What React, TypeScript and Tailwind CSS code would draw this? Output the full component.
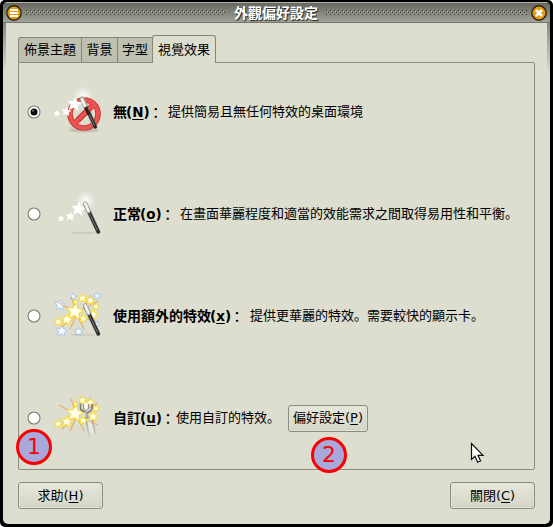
import React from "react";

const STAR = "M0-5 1.5-1.8 5-1.5 2.4.8 3.2 4.3 0 2.4-3.2 4.3-2.4.8-5-1.5-1.5-1.8Z";

type StarProps = { x: number; y: number; s: number; kind: "white" | "gold" | "blue"; r?: number };

function Star({ x, y, s, kind, r = 8 }: StarProps) {
  const stroke = kind === "gold" ? "#f8dc2c" : kind === "blue" ? "#b0cbea" : "#ebebe4";
  const fill = kind === "gold" ? "#fffef0" : kind === "blue" ? "#f6faff" : "#ffffff";
  return (
    <g transform={`translate(${x} ${y}) rotate(${r}) scale(${s})`}>
      <path d={STAR} fill={fill} stroke={stroke} strokeWidth={kind === "white" ? 0.6 : 2.6 / s} strokeLinejoin="round" />
      <path d={STAR} fill={fill} stroke={fill} strokeWidth={kind === "white" ? 0 : 0.5 / s} />
    </g>
  );
}

function Wand() {
  return (
    <g>
      <ellipse cx="30" cy="44" rx="13" ry="1.3" fill="#8d8d80" opacity=".18" />
      <path d="M32.300 15 45.300 42.800" stroke="#777872" strokeWidth="4.200" strokeLinecap="round" />
      <path d="M32.300 15 45.300 42.800" stroke="#222422" strokeWidth="3" strokeLinecap="round" />
      <path d="M36 23.500 44.500 41.500" stroke="#7d807a" strokeWidth="1" />
      <path d="M32.300 14.500 35.500 22" stroke="#a5a59e" strokeWidth="4.200" strokeLinecap="round" />
      <path d="M32.300 14.500 35.500 22" stroke="#f5f5f2" strokeWidth="2.600" strokeLinecap="round" />
    </g>
  );
}

function Glow() {
  return (
    <>
      <defs>
        <radialGradient id="glow">
          <stop offset="0" stopColor="#fff" stopOpacity=".95" />
          <stop offset="1" stopColor="#fff" stopOpacity="0" />
        </radialGradient>
      </defs>
      <circle cx="33" cy="12" r="10" fill="url(#glow)" />
    </>
  );
}

function WhiteStars() {
  return (
    <>
      <Star x={8} y={29.5} s={0.65} kind="white" />
      <Star x={17.3} y={27.5} s={0.88} kind="white" />
      <Star x={25.5} y={20} s={1.4} kind="white" />
    </>
  );
}

function GoldStars() {
  return (
    <>
      <path d="M22 21 6 12M23 19 18 6M21 24 9 36M23 25 17 38M27 20 45 10M30 18 38 4M28 25 45 32M25 26 31 38" stroke="#ef9a45" strokeWidth="1.200" opacity=".7" />
      <Star x={5.2} y={30.8} s={0.58} kind="gold" />
      <Star x={14} y={28.5} s={0.85} kind="gold" />
      <Star x={22} y={20.5} s={1.4} kind="gold" />
      <Star x={29.5} y={7.2} s={0.6} kind="gold" />
      <Star x={37.3} y={9.5} s={0.6} kind="gold" />
      <Star x={43} y={15.500} s={0.42} kind="gold" />
      <Star x={22.7} y={11} s={0.25} kind="gold" />
      <Star x={40.2} y={23.500} s={0.75} kind="gold" />
      <Star x={30.2} y={27.500} s={0.6} kind="gold" />
    </>
  );
}

function NoneIcon() {
  return (
    <svg width="52" height="50" viewBox="0 0 52 50">
      <g transform="translate(-3 -3)"><Glow /></g>
      <ellipse cx="31" cy="43.500" rx="15" ry="2" fill="#88887c" opacity=".3" />
      <g fill="none">
        <circle cx="31" cy="27" r="14" stroke="#cc3030" strokeWidth="5.600" />
        <path d="M21.500 36.500 40.500 17.500" stroke="#cc3030" strokeWidth="5.600" />
        <circle cx="31" cy="27" r="14" stroke="#ec5353" strokeWidth="3.800" />
        <path d="M20.500 37.500 41.500 16.500" stroke="#ec5353" strokeWidth="3.800" />
      </g>
      <g transform="translate(-3 -3)"><Wand /></g>
      <path d="M25 33 37 21" stroke="#cc3030" strokeWidth="5.600" />
      <path d="M22 36 40 18" stroke="#ec5353" strokeWidth="3.800" />
      <path d="M29 12.500 32.500 20" stroke="#a5a59e" strokeWidth="4.200" strokeLinecap="round" />
      <path d="M29 12.500 32.500 20" stroke="#f5f5f2" strokeWidth="2.600" strokeLinecap="round" />
      <path d="M32.500 20 36 27.500" stroke="#222422" strokeWidth="3.200" />
      <g transform="translate(-4 -3)"><WhiteStars /></g>
    </svg>
  );
}

function NormalIcon() {
  return (
    <svg width="52" height="50" viewBox="0 0 52 50">
      <Glow />
      <WhiteStars />
      <Wand />
    </svg>
  );
}

function ExtraIcon() {
  return (
    <svg width="52" height="50" viewBox="0 0 52 50">
      <Star x={7} y={14} s={0.85} kind="blue" />
      <Star x={20} y={5.4} s={0.42} kind="blue" />
      <Star x={44.2} y={5} s={0.5} kind="blue" />
      <Star x={8.7} y={40} s={0.85} kind="blue" />
      <Star x={25.7} y={40.7} s={0.6} kind="blue" />
      <Star x={43.3} y={32.5} s={0.55} kind="blue" />
      <GoldStars />
      <Wand />
    </svg>
  );
}

function CustomIcon() {
  return (
    <svg width="52" height="50" viewBox="0 0 52 50">
      <defs>
        <linearGradient id="leg" x1="0" y1="24" x2="0" y2="47" gradientUnits="userSpaceOnUse">
          <stop offset="0" stopColor="#96978e" />
          <stop offset="1" stopColor="#b0b1a5" stopOpacity=".25" />
        </linearGradient>
      </defs>
      <path d="M32.500 24 36.800 46M38.500 24 42.500 41" stroke="url(#leg)" strokeWidth="1.400" />
      <path d="M35.500 24 38.500 40" stroke="#edeee8" strokeWidth="3.500" opacity=".75" />
      <GoldStars />
      <path d="M27.500 10.500v4.500q0 3 5 4M39 11q1 6-3 8l-3 1" fill="none" stroke="#7c7e77" strokeWidth="1.700" />
      <path d="M33 10v7" stroke="#f8f8f4" strokeWidth="3.500" />
      <path d="M30.500 11v5q2.500 3 5 0v-5" fill="none" stroke="#94968e" strokeWidth="1" />
      <path d="M33.500 20 35 26" stroke="#a9aaa2" strokeWidth="2.500" />
    </svg>
  );
}

function Radio({ on }: { on?: boolean }) {
  return (
    <svg className="h-[14px] w-[14px] shrink-0" viewBox="0 0 14 14">
      <circle cx="7" cy="7" r="6" fill="#fff" stroke="#7b7c73" strokeWidth="1.100" />
      {on && <circle cx="7" cy="7" r="3.500" fill="#0b0b0b" />}
      {on && <circle cx="6" cy="5.800" r="1" fill="#77776f" />}
    </svg>
  );
}

type RowProps = {
  icon: React.ReactNode;
  name: string;
  k: string;
  labelClass: string;
  text: string;
  on?: boolean;
  children?: React.ReactNode;
};

function Row({ icon, name, k, labelClass, text, on, children }: RowProps) {
  return (
    <div className="flex h-[50px] items-center whitespace-nowrap pl-[8px]">
      <Radio on={on} />
      <div className="ml-[12px] w-[52px] shrink-0">{icon}</div>
      <div className={`ml-[8px] flex shrink-0 text-[14px] font-bold leading-[18px] ${labelClass}`}>
        <span>{name}</span>
        <span className="-ml-px text-[13.5px]">(<u className="underline-offset-2">{k}</u>)</span>
        <span className="-ml-px pt-px font-medium">：</span>
      </div>
      <div className="shrink-0 text-[13px] leading-[18px]">{text}</div>
      {children}
    </div>
  );
}

const BUTTON =
  "flex h-[27px] items-center justify-center rounded-[3px] border border-[#8b8c80] bg-linear-to-b from-[#e6e7dc] to-[#d5d6c6] text-[13px] shadow-[inset_0_0_0_1px_#e4e5d9,inset_-1px_-1px_2px_#c4c5b5]";

function Marker({ n, place }: { n: number; place: string }) {
  return (
    <div className={`absolute flex h-[36px] w-[36px] items-center justify-center rounded-full border-[3px] border-[#f80000] bg-[#a8a8dc] font-['DejaVu_Sans'] text-[22px] leading-none text-[#f80000] ${place}`}>
      {n}
    </div>
  );
}

function Dots({ className }: { className: string }) {
  return (
    <svg className={`h-[6px] ${className}`}>
      <defs>
        <pattern id="grip" width="4" height="5" patternUnits="userSpaceOnUse">
          <path d="M1 1h1v1H1zM3 3h1v1H3z" fill="#b5b5aa" />
          <path d="M0 0h1v1H0zM2 2h1v1H2zM0 4h1v1H0z" fill="#2f302b" />
        </pattern>
      </defs>
      <rect width="100%" height="5" fill="url(#grip)" />
    </svg>
  );
}

const TAB = "flex h-[25px] items-center justify-center border border-b-0 border-[#85867a] bg-[#bfc0b0] text-[13px]";

export default function App() {
  return (
    <div
      lang="ja"
      className="relative h-[527px] w-[553px] overflow-hidden rounded-[5px] bg-black px-[3px] pt-[2px] font-['DejaVu_Sans','Noto_Sans_CJK_JP',sans-serif] text-[13px] text-black"
    >
      <div className="relative flex h-[522px] flex-col overflow-hidden rounded-[5px] bg-[#dddecf]">
        <div className="flex h-[21px] shrink-0 items-center border-t border-b border-t-[#b3b3a9] border-b-[#74756c] bg-linear-to-b from-[#66675f] to-[#a3a498]">
          <svg className="ml-[3px] h-[16px] w-[16px]" viewBox="0 0 16 16">
            <circle cx="8" cy="8" r="7.200" fill="#e99b10" stroke="#2d2512" strokeWidth="1.400" />
            <path d="M4 5h8M4 8h8M4 11h8" stroke="#fff" strokeWidth="2" />
          </svg>
          <Dots className="ml-[4px] w-[199px]" />
          <div className="ml-[9px] w-[85px] whitespace-nowrap text-[14px] font-bold leading-[18px] text-white [text-shadow:1px_1px_1px_#222]">外觀偏好設定</div>
          <Dots className="ml-[7px] w-[201px]" />
          <svg className="ml-[4px] h-[16px] w-[16px]" viewBox="0 0 16 16">
            <circle cx="8" cy="8" r="7.200" fill="#e99b10" stroke="#2d2512" strokeWidth="1.400" />
            <path d="m5 5 6 6M11 5l-6 6" stroke="#fff" strokeWidth="2.500" />
          </svg>
        </div>
        <div className="absolute left-0 top-[21px] h-[50px] w-[3px] bg-linear-to-b from-[#88897e] to-[#dddecf]" />
        <div className="absolute right-0 top-[21px] h-[50px] w-[3px] bg-linear-to-b from-[#88897e] to-[#dddecf]" />

        <div className="relative z-10 ml-[15px] mt-[12px] -mb-px flex h-[28px] items-end whitespace-nowrap">
          <div className={`${TAB} mb-px w-[63px] rounded-tl-[3px] border-r-0`}>佈景主題</div>
          <div className={`${TAB} mb-px w-[36px] border-r-0`}>背景</div>
          <div className={`${TAB} mb-px w-[35px] border-r-0`}>字型</div>
          <div className="flex h-[28px] w-[64px] items-center justify-center rounded-t-[3px] border border-b-0 border-[#85867a] bg-[#dddecf] text-[13px]">視覺效果</div>
        </div>

        <div className="ml-[15px] flex h-[408px] w-[517px] shrink-0 flex-col gap-[52px] rounded-[2px] rounded-tl-none border border-[#8b8c80] pt-[24px]">
          <Row on icon={<NoneIcon />} name="無" k="N" labelClass="w-[55px]" text="提供簡易且無任何特效的桌面環境" />
          <Row icon={<NormalIcon />} name="正常" k="o" labelClass="w-[67px]" text="在畫面華麗程度和適當的效能需求之間取得易用性和平衡。" />
          <Row icon={<ExtraIcon />} name="使用額外的特效" k="x" labelClass="w-[137px]" text="提供更華麗的特效。需要較快的顯示卡。" />
          <Row icon={<CustomIcon />} name="自訂" k="u" labelClass="w-[63px]" text="使用自訂的特效。">
            <div className={`${BUTTON} ml-[8px] w-[80px]`}>偏好設定(<u className="underline-offset-2">P</u>)</div>
          </Row>
        </div>

        <div className="mx-[15px] mt-[12px] flex justify-between">
          <div className={`${BUTTON} w-[85px]`}>求助(<u className="underline-offset-2">H</u>)</div>
          <div className={`${BUTTON} w-[85px]`}>關閉(<u className="underline-offset-2">C</u>)</div>
        </div>
      </div>

      <Marker n={1} place="left-[16px] top-[429px]" />
      <Marker n={2} place="left-[311px] top-[437px]" />
      <svg className="absolute left-[470px] top-[442px] h-[22px] w-[15px]" viewBox="0 0 15 22">
        <path d="M1.500 1.500v16l3.500-3.200 2.600 6 3-1.300-2.600-5.700h5z" fill="#fff" stroke="#111" strokeWidth="1.200" />
      </svg>
    </div>
  );
}
